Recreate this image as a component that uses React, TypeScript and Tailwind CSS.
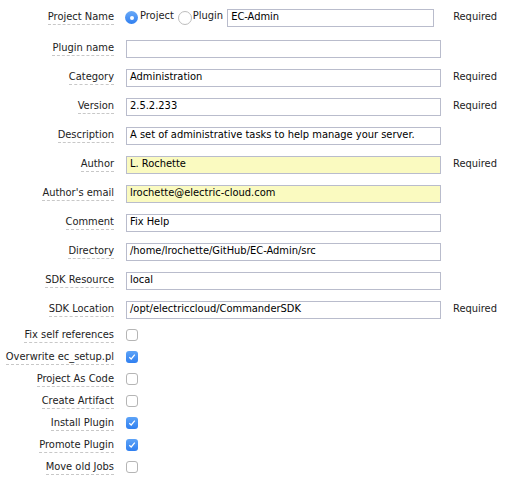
import React from 'react';

type Field = {
  label: string;
  value: string;
  required?: boolean;
  yellow?: boolean;
};

const fields: Field[] = [
  { label: 'Plugin name', value: '' },
  { label: 'Category', value: 'Administration', required: true },
  { label: 'Version', value: '2.5.2.233', required: true },
  { label: 'Description', value: 'A set of administrative tasks to help manage your server.' },
  { label: 'Author', value: 'L. Rochette', required: true, yellow: true },
  { label: "Author's email", value: 'lrochette@electric-cloud.com', yellow: true },
  { label: 'Comment', value: 'Fix Help' },
  { label: 'Directory', value: '/home/lrochette/GitHub/EC-Admin/src' },
  { label: 'SDK Resource', value: 'local' },
  { label: 'SDK Location', value: '/opt/electriccloud/CommanderSDK', required: true },
];

const checks: { label: string; checked: boolean }[] = [
  { label: 'Fix self references', checked: false },
  { label: 'Overwrite ec_setup.pl', checked: true },
  { label: 'Project As Code', checked: false },
  { label: 'Create Artifact', checked: false },
  { label: 'Install Plugin', checked: true },
  { label: 'Promote Plugin', checked: true },
  { label: 'Move old Jobs', checked: false },
];

function Label({ text }: { text: string }) {
  return (
    <div className="w-[114px] shrink-0 flex justify-end">
      <span className="border-b border-dashed border-[#c8c8c8] leading-[14px] text-[#222]">{text}</span>
    </div>
  );
}

function Required({ show }: { show?: boolean }) {
  return show ? <span className="ml-[12px] text-[#222]">Required</span> : null;
}

function Radio({ checked }: { checked: boolean }) {
  return checked ? (
    <span className="shrink-0 w-[13px] h-[13px] rounded-full bg-gradient-to-b from-[#69a9f7] to-[#2f7ff0] flex items-center justify-center">
      <span className="block w-[4px] h-[4px] rounded-full bg-white" />
    </span>
  ) : (
    <span className="shrink-0 block w-[14px] h-[14px] rounded-full bg-white border border-[#bdbdbd]" />
  );
}

function Check({ checked }: { checked: boolean }) {
  return checked ? (
    <span className="shrink-0 w-[12px] h-[12px] rounded-[3px] bg-gradient-to-b from-[#5da3f7] to-[#2f7ff0] flex items-center justify-center">
      <svg width="8" height="8" viewBox="0 0 8 8">
        <path d="M1.3 4.2 L3.2 6 L6.8 1.6" fill="none" stroke="white" strokeWidth="1.2" />
      </svg>
    </span>
  ) : (
    <span className="shrink-0 block w-[12px] h-[12px] rounded-[3px] bg-white border border-[#b5b5b5]" />
  );
}

function Input({ value, yellow, width = 'w-[315px]' }: { value: string; yellow?: boolean; width?: string }) {
  return (
    <div
      className={`${width} h-[18px] border border-[#b9bccc] px-[3px] flex items-center text-black ${
        yellow ? 'bg-[#fafac0]' : 'bg-white'
      }`}
    >
      {value}
    </div>
  );
}

export default function App() {
  return (
    <div
      className="w-[510px] h-[481px] bg-white text-[11px] pt-[4px]"
      style={{ fontFamily: '"DejaVu Sans Condensed", "DejaVu Sans", sans-serif' }}
    >
      <div className="flex items-center h-[27px]">
        <Label text="Project Name" />
        <div className="ml-[11px] flex items-center">
          <Radio checked />
          <span className="ml-[2px] -mt-[3px] text-[#222]">Project</span>
          <span className="ml-[4px]"><Radio checked={false} /></span>
          <span className="ml-[1px] -mt-[3px] text-[#222]">Plugin</span>
          <span className="ml-[4px]"><Input value="EC-Admin" width="w-[207px]" /></span>
        </div>
        <span className="ml-[7px]"><Required show /></span>
      </div>

      <div className="pt-[3px]">
        {fields.map((f) => (
          <div key={f.label} className="flex items-center h-[29px]">
            <Label text={f.label} />
            <div className="ml-[12px]">
              <Input value={f.value} yellow={f.yellow} />
            </div>
            <Required show={f.required} />
          </div>
        ))}
      </div>

      <div>
        {checks.map((c) => (
          <div key={c.label} className="flex items-center h-[22px]">
            <Label text={c.label} />
            <div className="ml-[12px]">
              <Check checked={c.checked} />
            </div>
          </div>
        ))}
      </div>
    </div>
  );
}
